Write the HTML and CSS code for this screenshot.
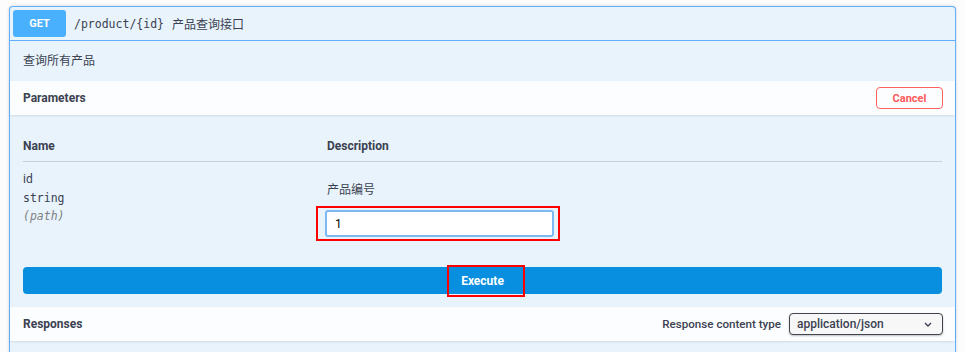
FILE: index.html
```html
<!DOCTYPE html>
<html lang="zh">
<head>
<meta charset="utf-8">
<title>/product/{id}</title>
<link rel="stylesheet" href="styles.css">
</head>
<body>
<div class="opblock">
  <div class="summary">
    <span class="method">GET</span>
    <span class="path">/product/{id}</span>
    <span class="summary-desc">产品查询接口</span>
  </div>
  <div class="description">查询所有产品</div>
  <div class="section-header">
    <h4>Parameters</h4>
    <button class="btn-cancel">Cancel</button>
  </div>
  <div class="params">
    <div class="params-head">
      <div class="col-name">Name</div>
      <div class="col-desc">Description</div>
    </div>
    <div class="params-row">
      <div class="col-name">
        <div class="p-name">id</div>
        <div class="p-type">string</div>
        <div class="p-in">(path)</div>
      </div>
      <div class="col-desc">
        <div class="p-desc">产品编号</div>
        <div class="mark">
          <div class="input">1</div>
        </div>
      </div>
    </div>
  </div>
  <div class="execute-wrap">
    <button class="btn-execute">Execute<span class="mark-exec"></span></button>
  </div>
  <div class="section-header responses">
    <h4>Responses</h4>
    <div class="ctype">
      <span class="ctype-label">Response content type</span>
      <div class="select">
        <span>application/json</span>
        <svg width="8" height="5" viewBox="0 0 8 5"><path d="M1 1 L4 4 L7 1" fill="none" stroke="#3b4151" stroke-width="1.4"/></svg>
      </div>
    </div>
  </div>
</div>
</body>
</html>
```

FILE: styles.css
```css
html, body {
  margin: 0;
  background: #fcfcfc;
}
body {
  padding: 6px 9px 0;
  font-family: Roboto, "Noto Sans CJK SC", sans-serif;
  color: #3b4151;
}
.opblock {
  border: 1px solid #61affe;
  border-bottom: none;
  border-radius: 4px 4px 0 0;
  background: #e8f3fc;
  box-shadow: 0 0 3px rgba(0, 0, 0, 0.19);
  height: 346px;
  box-sizing: border-box;
}
.summary {
  display: flex;
  align-items: center;
  padding: 3px;
  border-bottom: 1px solid #61affe;
}
.method {
  width: 53px;
  height: 27px;
  background: #49b0fe;
  color: #fff;
  border-radius: 3px;
  font-weight: 700;
  font-size: 11px;
  display: flex;
  align-items: center;
  justify-content: center;
}
.path {
  margin-left: 8px;
  font-family: "DejaVu Sans Mono", monospace;
  font-size: 11.5px;
  color: #3b4151;
}
.summary-desc {
  margin-left: 8px;
  font-size: 12px;
  font-family: "Noto Sans CJK SC", sans-serif;
}
.description {
  height: 40px;
  box-sizing: border-box;
  padding: 0 13px 3px;
  display: flex;
  align-items: center;
  font-size: 12px;
  font-family: "Noto Sans CJK SC", sans-serif;
}
.section-header {
  height: 34px;
  display: flex;
  align-items: center;
  justify-content: space-between;
  padding: 0 12px 0 13px;
  background: rgba(255, 255, 255, 0.8);
  box-shadow: 0 1px 2px rgba(0, 0, 0, 0.1);
}
.section-header h4 {
  margin: 0;
  font-size: 12px;
  font-weight: 700;
}
.btn-cancel {
  width: 67px;
  height: 22px;
  border: 1.5px solid #ff6060;
  border-radius: 4px;
  background: transparent;
  color: #ff5a5a;
  font-family: Roboto, sans-serif;
  font-weight: 700;
  font-size: 11px;
  padding: 0;
}
.params {
  padding: 0 13px;
}
.params-head {
  display: flex;
  padding: 23px 0 7px;
  border-bottom: 1px solid rgba(59, 65, 81, 0.2);
  font-size: 12px;
  font-weight: 700;
  line-height: 16px;
}
.col-name {
  width: 304px;
}
.col-desc {
  flex: 1;
}
.params-row {
  display: flex;
}
.p-name {
  margin-top: 9px;
  font-size: 12px;
  line-height: 16px;
  color: #3b4151;
}
.p-type {
  margin-top: 2px;
  font-family: "DejaVu Sans Mono", monospace;
  font-size: 11.5px;
  line-height: 18px;
}
.p-in {
  font-family: "DejaVu Sans Mono", monospace;
  font-size: 11.5px;
  line-height: 18px;
  font-style: italic;
  color: #808080;
}
.p-desc {
  margin-top: 19px;
  font-size: 12px;
  line-height: 16px;
  font-family: "Noto Sans CJK SC", sans-serif;
}
.mark {
  margin-top: 9px;
  margin-left: -11px;
  width: 244px;
  height: 35px;
  box-sizing: border-box;
  border: 2px solid #f00;
  padding: 2px 0 0 7px;
}
.input {
  width: 229px;
  height: 27px;
  box-sizing: border-box;
  border: 2px solid #7cb9f2;
  border-radius: 3px;
  background: #fff;
  padding-left: 8px;
  display: flex;
  align-items: center;
  font-size: 12px;
  color: #000;
}
.execute-wrap {
  padding: 26px 13px 13px;
}
.btn-execute {
  position: relative;
  width: 100%;
  height: 27px;
  border: none;
  border-radius: 4px;
  background: #088fe0;
  color: #fff;
  font-family: Roboto, sans-serif;
  font-weight: 700;
  font-size: 12px;
  padding: 0;
}
.mark-exec {
  position: absolute;
  left: 424px;
  top: -2px;
  width: 78px;
  height: 32px;
  box-sizing: border-box;
  border: 2px solid #f00;
}
.ctype {
  display: flex;
  align-items: center;
  gap: 8px;
}
.ctype-label {
  font-size: 11.6px;
  font-weight: 500;
}
.select {
  width: 154px;
  height: 22px;
  box-sizing: border-box;
  border: 1.5px solid #41444e;
  border-radius: 4px;
  box-shadow: 0 1px 2px rgba(0, 0, 0, 0.25);
  background: #f7f7f7;
  display: flex;
  align-items: center;
  justify-content: space-between;
  padding: 0 10px 0 7px;
  font-size: 12px;
  font-weight: 500;
}
```
